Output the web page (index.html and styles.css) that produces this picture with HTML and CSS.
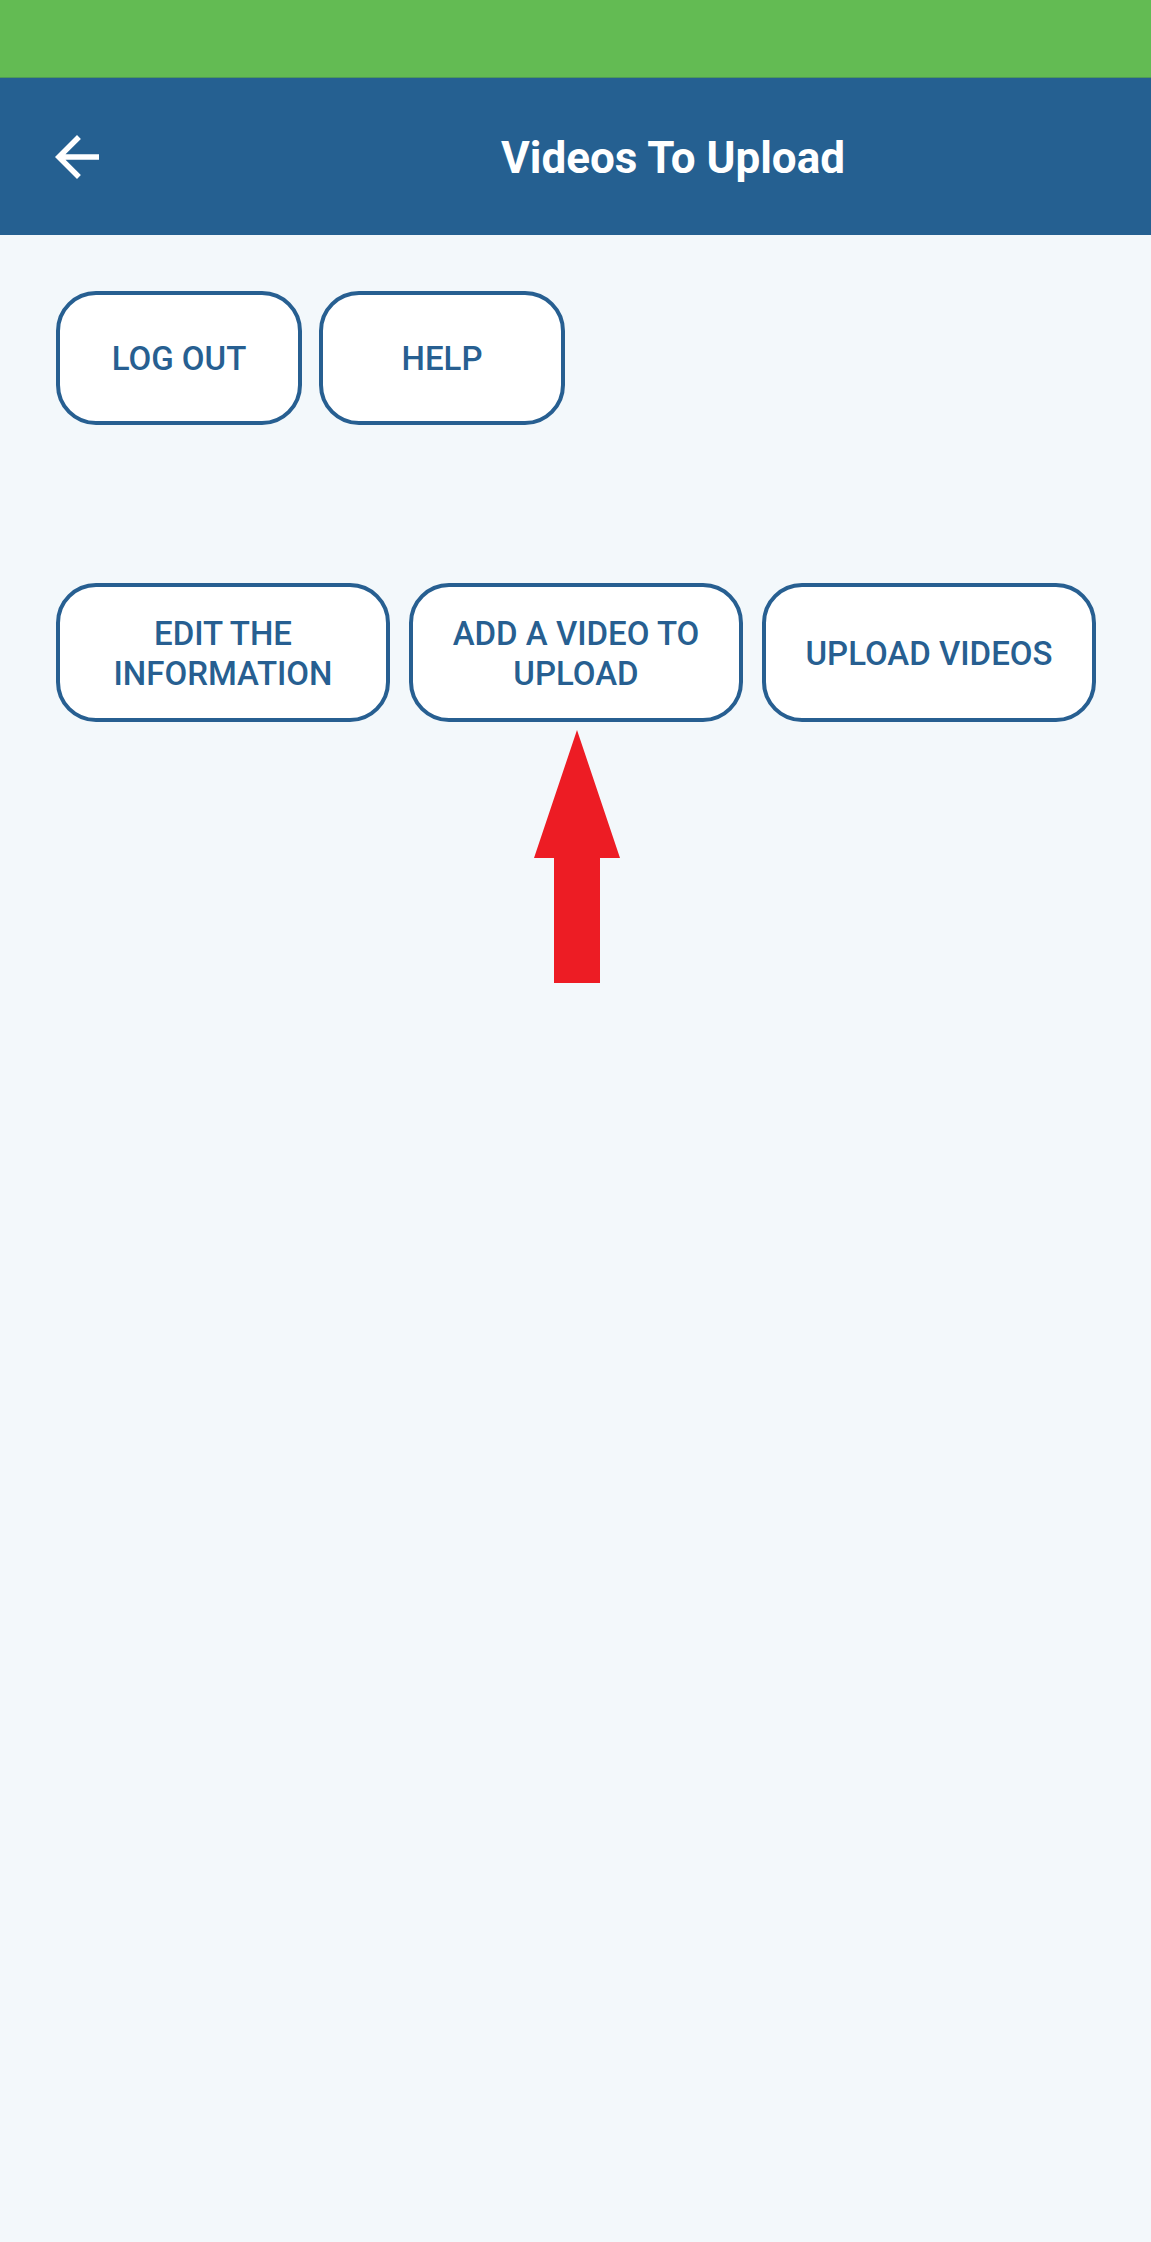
FILE: index.html
```html
<!DOCTYPE html>
<html>
<head>
<meta charset="utf-8">
<link rel="stylesheet" href="styles.css">
</head>
<body>
<div class="screen">
  <div class="status"></div>
  <header class="appbar">
    <svg class="back" viewBox="0 0 24 24" width="66" height="66"><path fill="#fff" d="M20 11H7.83l5.59-5.59L12 4l-8 8 8 8 1.41-1.41L7.83 13H20v-2z"/></svg>
    <h1 class="title">Videos To Upload</h1>
  </header>
  <main class="content">
    <div class="row row1">
      <button class="btn small">LOG OUT</button>
      <button class="btn small">HELP</button>
    </div>
    <div class="row row2">
      <button class="btn wide">EDIT THE<br>INFORMATION</button>
      <button class="btn wide">ADD A VIDEO TO<br>UPLOAD</button>
      <button class="btn wide">UPLOAD VIDEOS</button>
    </div>
    <svg class="pointer" width="90" height="256" viewBox="0 0 90 256"><polygon fill="#ED1C24" points="43,0 86,128 66,128 66,253 20,253 20,128 0,128"/></svg>
  </main>
</div>
</body>
</html>
```

FILE: styles.css
```css
html, body {
  margin: 0;
  padding: 0;
}
body {
  width: 1151px;
  height: 2242px;
  background: #F3F8FB;
  font-family: Roboto, "Noto Sans", "Liberation Sans", sans-serif;
  overflow: hidden;
}
.screen {
  display: flex;
  flex-direction: column;
  height: 2242px;
}
.status {
  height: 78px;
  background: #63BB53;
  border-bottom: 1px solid #4f9a58;
  box-sizing: border-box;
}
.appbar {
  height: 157px;
  background: #256091;
  display: flex;
  align-items: center;
  padding-left: 44px;
  box-sizing: border-box;
}
.back {
  display: block;
  flex: none;
}
.title {
  margin: 2px 0 0 391px;
  color: #fff;
  font-weight: 700;
  font-size: 44px;
  line-height: 52px;
  white-space: nowrap;
}
.content {
  position: relative;
  flex: 1;
  padding: 56px 55px 0 56px;
}
.row {
  display: flex;
}
.row1 {
  gap: 17px;
}
.row2 {
  gap: 19px;
  margin-top: 158px;
}
.btn {
  box-sizing: border-box;
  background: #fff;
  border: 4px solid #275F91;
  color: #275F91;
  font-family: Roboto, "Noto Sans", "Liberation Sans", sans-serif;
  font-weight: 500;
  font-size: 33px;
  line-height: 40px;
  text-align: center;
  padding: 2px 0 0 0;
  display: flex;
  align-items: center;
  justify-content: center;
}
.small {
  width: 246px;
  height: 134px;
  border-radius: 40px;
}
.wide {
  width: 335px;
  height: 139px;
  border-radius: 40px;
}
.pointer {
  position: absolute;
  left: 534px;
  top: 495px;
}
```
